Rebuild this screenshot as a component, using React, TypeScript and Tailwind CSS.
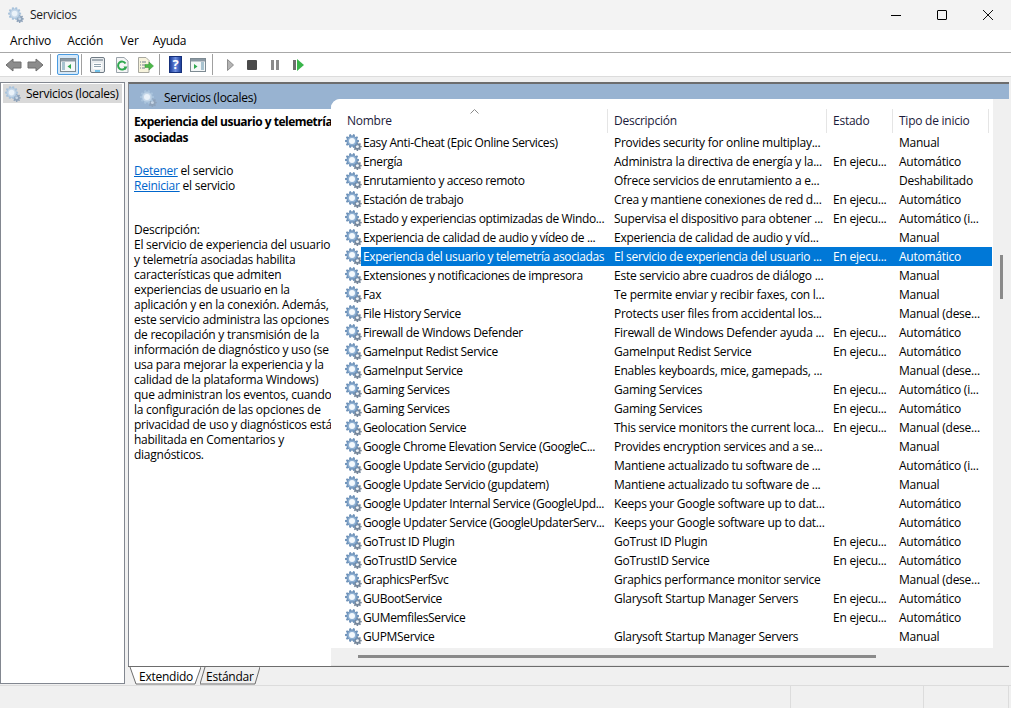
import React from "react";

const rows: [string, string, string, string][] = [
  ["Easy Anti-Cheat (Epic Online Services)", "Provides security for online multiplay...", "", "Manual"],
  ["Energía", "Administra la directiva de energía y la...", "En ejecu...", "Automático"],
  ["Enrutamiento y acceso remoto", "Ofrece servicios de enrutamiento a e...", "", "Deshabilitado"],
  ["Estación de trabajo", "Crea y mantiene conexiones de red d...", "En ejecu...", "Automático"],
  ["Estado y experiencias optimizadas de Windo...", "Supervisa el dispositivo para obtener ...", "En ejecu...", "Automático (i..."],
  ["Experiencia de calidad de audio y vídeo de ...", "Experiencia de calidad de audio y víd...", "", "Manual"],
  ["Experiencia del usuario y telemetría asociadas", "El servicio de experiencia del usuario ...", "En ejecu...", "Automático"],
  ["Extensiones y notificaciones de impresora", "Este servicio abre cuadros de diálogo ...", "", "Manual"],
  ["Fax", "Te permite enviar y recibir faxes, con l...", "", "Manual"],
  ["File History Service", "Protects user files from accidental los...", "", "Manual (dese..."],
  ["Firewall de Windows Defender", "Firewall de Windows Defender ayuda ...", "En ejecu...", "Automático"],
  ["GameInput Redist Service", "GameInput Redist Service", "En ejecu...", "Automático"],
  ["GameInput Service", "Enables keyboards, mice, gamepads, ...", "", "Manual (dese..."],
  ["Gaming Services", "Gaming Services", "En ejecu...", "Automático (i..."],
  ["Gaming Services", "Gaming Services", "En ejecu...", "Automático"],
  ["Geolocation Service", "This service monitors the current loca...", "En ejecu...", "Manual (dese..."],
  ["Google Chrome Elevation Service (GoogleC...", "Provides encryption services and a se...", "", "Manual"],
  ["Google Update Servicio (gupdate)", "Mantiene actualizado tu software de ...", "", "Automático (i..."],
  ["Google Update Servicio (gupdatem)", "Mantiene actualizado tu software de ...", "", "Manual"],
  ["Google Updater Internal Service (GoogleUpd...", "Keeps your Google software up to dat...", "", "Automático"],
  ["Google Updater Service (GoogleUpdaterServ...", "Keeps your Google software up to dat...", "", "Automático"],
  ["GoTrust ID Plugin", "GoTrust ID Plugin", "En ejecu...", "Automático"],
  ["GoTrustID Service", "GoTrustID Service", "En ejecu...", "Automático"],
  ["GraphicsPerfSvc", "Graphics performance monitor service", "", "Manual (dese..."],
  ["GUBootService", "Glarysoft Startup Manager Servers", "En ejecu...", "Automático"],
  ["GUMemfilesService", "", "En ejecu...", "Automático"],
  ["GUPMService", "Glarysoft Startup Manager Servers", "", "Manual"],
];

const description = [
  "El servicio de experiencia del usuario",
  "y telemetría asociadas habilita",
  "características que admiten",
  "experiencias de usuario en la",
  "aplicación y en la conexión. Además,",
  "este servicio administra las opciones",
  "de recopilación y transmisión de la",
  "información de diagnóstico y uso (se",
  "usa para mejorar la experiencia y la",
  "calidad de la plataforma Windows)",
  "que administran los eventos, cuando",
  "la configuración de las opciones de",
  "privacidad de uso y diagnósticos está",
  "habilitada en Comentarios y",
  "diagnósticos.",
];

function gearPath(cx: number, cy: number, ro: number, ri: number, teeth: number) {
  const pts: string[] = [];
  for (let i = 0; i < teeth; i++) {
    const a = (i / teeth) * Math.PI * 2;
    const w = Math.PI / teeth;
    const p = [
      [ri, a - w * 0.75],
      [ro, a - w * 0.4],
      [ro, a + w * 0.4],
      [ri, a + w * 0.75],
    ];
    for (const [r, t] of p) pts.push(`${(cx + r * Math.cos(t)).toFixed(2)},${(cy + r * Math.sin(t)).toFixed(2)}`);
  }
  return pts.join(" ");
}

function Gears({ className = "", pale = false }: { className?: string; pale?: boolean }) {
  return (
    <svg viewBox="0 0 17 17" className={className}>
      <polygon points={gearPath(12.4, 12.6, 4.4, 3.2, 8)} fill={pale ? "#8fa3ba" : "#75869a"} />
      <circle cx="12.4" cy="12.6" r="1.5" fill={pale ? "#c7d6e6" : "#eef2f6"} />
      <polygon points={gearPath(7, 7, 7, 5.4, 10)} fill={pale ? "#a9c3dc" : "#6f93ba"} />
      <circle cx="7" cy="7" r="4.6" fill={pale ? "#c4d6e8" : "#8fb0d2"} />
      <circle cx="7" cy="7" r="3" fill={pale ? "#eaf2f9" : "#f4f9fd"} />
    </svg>
  );
}

function Toolbar() {
  return (
    <div className="h-[23px] bg-white flex items-center pl-[5px]">
      <svg viewBox="0 0 17 14" className="w-[17px] h-[14px]">
        <path d="M1 7 L8 1 V4 H16 V10 H8 V13 Z" fill="#8c8c8c" stroke="#6f6f6f" strokeWidth="1" />
      </svg>
      <svg viewBox="0 0 17 14" className="w-[17px] h-[14px] ml-[5px]">
        <path d="M16 7 L9 1 V4 H1 V10 H9 V13 Z" fill="#8c8c8c" stroke="#6f6f6f" strokeWidth="1" />
      </svg>
      <div className="w-px h-[21px] bg-[#a0a0a0] ml-[6px] mr-[6px]" />
      <div className="w-[22px] h-[21px] rounded-[2px] border border-[#4a9be0] bg-[#d5e8f8] flex items-center justify-center">
        <svg viewBox="0 0 16 14" className="w-[16px] h-[14px]">
          <rect x="0.5" y="0.5" width="15" height="13" fill="#f4f7f8" stroke="#7d8a92" />
          <rect x="1" y="1" width="14" height="2.5" fill="#8a98a3" />
          <path d="M2 5h3M2 7h3M2 9h3M2 11h3" stroke="#5d8fa8" />
          <path d="M11 6 V11 L7.5 8.5 Z" fill="#2fa84f" />
        </svg>
      </div>
      <div className="w-px h-[21px] bg-[#a0a0a0] ml-[2px] mr-[8px]" />
      <svg viewBox="0 0 15 16" className="w-[15px] h-[16px]">
        <rect x="0.5" y="0.5" width="14" height="15" rx="1.5" fill="#e9ecee" stroke="#6f7a84" />
        <rect x="2" y="2" width="11" height="2" fill="#a4aeb6" />
        <rect x="3" y="6" width="9" height="6" fill="#fbfcfc" />
        <path d="M4 7.5h7M4 9.5h7" stroke="#8fa1ad" />
        <path d="M5 14h5" stroke="#3fb0e8" strokeWidth="1.4" />
      </svg>
      <svg viewBox="0 0 14 16" className="w-[14px] h-[16px] ml-[10px]">
        <path d="M1.5 .5H9L13 4V15.5H1.5Z" fill="#f5f6f6" stroke="#9aa3aa" />
        <path d="M10.5 6.5A4 4 0 1 0 10.6 10.5" fill="none" stroke="#2fa84f" strokeWidth="2" />
        <path d="M8.5 9.5 L12.5 9.5 L10.5 13 Z" fill="#2fa84f" />
      </svg>
      <svg viewBox="0 0 17 16" className="w-[17px] h-[16px] ml-[8px]">
        <path d="M1.5 .5H9L12 3.5V15.5H1.5Z" fill="#f7f3dc" stroke="#a8a8a0" />
        <path d="M3 5h1M5 5h4M3 8h1M5 8h3M3 11h1M5 11h3" stroke="#6f7f8f" />
        <path d="M8 7.5H12V5L16.5 9L12 13V10.5H8Z" fill="#4cb848" stroke="#2f8f33" strokeWidth=".5" />
      </svg>
      <div className="w-px h-[21px] bg-[#a0a0a0] ml-[5px] mr-[9px]" />
      <div className="w-[13px] h-[17px] bg-gradient-to-r from-[#1f3f9c] via-[#6f8fe0] to-[#1f3f9c] border border-[#16307a] text-white text-[13px] leading-[15px] font-bold text-center">?</div>
      <svg viewBox="0 0 16 14" className="w-[16px] h-[14px] ml-[8px]">
        <rect x="0.5" y="0.5" width="15" height="13" fill="#f4f7f8" stroke="#7d8a92" />
        <rect x="1" y="1" width="14" height="2.5" fill="#8a98a3" />
        <path d="M11 5h3M11 7h3M11 9h3M11 11h3" stroke="#5d8fa8" />
        <path d="M4 6 V11 L7.5 8.5 Z" fill="#2fa84f" />
      </svg>
      <div className="w-px h-[21px] bg-[#a0a0a0] ml-[6px] mr-[14px]" />
      <svg viewBox="0 0 7 12" className="w-[7px] h-[12px]">
        <path d="M.5 .5 L6.5 6 L.5 11.5 Z" fill="#b4b4b4" stroke="#8d8d8d" />
      </svg>
      <div className="w-[10px] h-[10px] ml-[13px] bg-[#4a4a4a] rounded-[1px]" />
      <div className="ml-[14px] flex gap-[2px]">
        <div className="w-[3px] h-[10px] bg-[#8a8a8a]" />
        <div className="w-[3px] h-[10px] bg-[#8a8a8a]" />
      </div>
      <div className="ml-[14px] flex items-center gap-[1px]">
        <div className="w-[3px] h-[10px] bg-[#6f6f6f]" />
        <svg viewBox="0 0 7 12" className="w-[7px] h-[12px]">
          <path d="M0 0 L7 6 L0 12 Z" fill="#39b54a" />
        </svg>
      </div>
    </div>
  );
}

function Row({ r }: { r: [string, string, string, string] }) {
  const selected = r[0].startsWith("Experiencia del usuario");
  const bg = selected ? "bg-[#0078d7] text-white" : "text-black";
  return (
    <div className="grid grid-cols-[276px_219px_66px_100px] h-[19px] leading-[19px] whitespace-nowrap">
      <div className="flex pl-[14px] overflow-hidden">
        <Gears className="w-[17px] h-[17px] mt-px shrink-0" />
        <div className={`flex-1 ml-[-1px] pl-[2px] overflow-hidden tracking-[-0.36px] ${bg}`}>{r[0]}</div>
      </div>
      <div className={`pl-[7px] overflow-hidden ${bg}`}>{r[1]}</div>
      <div className={`pl-[7px] overflow-hidden ${bg}`}>{r[2]}</div>
      <div className={`pl-[7px] overflow-hidden ${bg}`}>{r[3]}</div>
    </div>
  );
}

export default function App() {
  return (
    <div
      className="w-[1011px] h-[708px] overflow-hidden bg-[#f0f0f0] flex flex-col text-[12px] text-black tracking-[-0.25px]"
      style={{ fontFamily: '"Open Sans", "Noto Sans", sans-serif' }}
    >
      {/* Title bar */}
      <div className="h-[30px] bg-[#f3f3f3] flex items-center pl-[8px]">
        <Gears pale className="w-[16px] h-[16px]" />
        <span className="ml-[6px] text-[#1a1a1a]">Servicios</span>
        <div className="ml-auto flex items-center">
          <div className="w-[46px] h-[30px] flex items-center justify-center">
            <div className="w-[10px] h-px bg-black" />
          </div>
          <div className="w-[46px] h-[30px] flex items-center justify-center">
            <div className="w-[10px] h-[10px] border border-black rounded-[1px]" />
          </div>
          <div className="w-[46px] h-[30px] flex items-center justify-center">
            <svg viewBox="0 0 10 10" className="w-[10px] h-[10px]">
              <path d="M0 0L10 10M10 0L0 10" stroke="#111" strokeWidth="1" />
            </svg>
          </div>
        </div>
      </div>

      {/* Menu */}
      <div className="h-[23px] bg-white border-b border-[#a8a8a8] flex items-center pl-[10px] text-[12px] tracking-[-0.1px]">
        <span>Archivo</span>
        <span className="ml-[16px]">Acción</span>
        <span className="ml-[17px]">Ver</span>
        <span className="ml-[14px] tracking-[-0.3px]">Ayuda</span>
      </div>

      <Toolbar />

      <div className="h-[6px] bg-[#f0f0f0] border-t border-[#dcdcdc]" />

      {/* Main */}
      <div className="flex-1 flex min-h-0">
        {/* Tree */}
        <div className="w-[125px] h-[602px] bg-white border border-[#828790] pt-[1px] pl-[2px] pr-[2px] self-start">
          <div className="h-[19px] bg-[#d9d9d9] flex items-center pl-[2px] whitespace-nowrap">
            <Gears pale className="w-[16px] h-[16px] shrink-0" />
            <span className="ml-[5px]">Servicios (locales)</span>
          </div>
        </div>

        {/* Right panel */}
        <div className="ml-[3px] w-[881px] flex flex-col">
          <div className="flex-1 min-h-0 flex border-t-2 border-[#6d6d6d] border-l border-l-[#828790]">
            {/* Description pane */}
            <div className="w-[202px] flex flex-col bg-white">
              <div className="h-[25px] bg-[#98b3d1] flex items-center pl-[11px] pt-[3px] whitespace-nowrap">
                <Gears pale className="w-[17px] h-[17px] shrink-0" />
                <span className="ml-[7px]">Servicios (locales)</span>
              </div>
              <div className="pl-[5px] pt-[5px] leading-[15px] whitespace-nowrap">
                <div className="font-bold leading-[16px] tracking-[-0.5px]">
                  Experiencia del usuario y telemetría
                  <br />
                  asociadas
                </div>
                <div className="mt-[17px]">
                  <span className="text-[#0066cc] underline">Detener</span> el servicio
                </div>
                <div>
                  <span className="text-[#0066cc] underline">Reiniciar</span> el servicio
                </div>
                <div className="mt-[29px]">Descripción:</div>
                {description.map((l) => (
                  <div key={l}>{l}</div>
                ))}
              </div>
            </div>

            {/* List */}
            <div className="flex-1 min-w-0 flex flex-col bg-[#98b3d1] pt-[15px]">
              <div className="flex-1 min-h-0 flex flex-col bg-[#f0f0f0] rounded-tl-[9px] overflow-hidden">
                <div className="flex-1 min-h-0 flex">
                  <div className="w-[662px] bg-white flex flex-col h-[549px]">
                    <div className="relative grid grid-cols-[277px_219px_66px_96px] h-[34px] shrink-0">
                      <svg viewBox="0 0 9 5" className="absolute left-[139px] top-[10px] w-[9px] h-[5px]">
                        <path d="M.5 4.5L4.5 .5L8.5 4.5" fill="none" stroke="#8a8a8a" />
                      </svg>
                      {["Nombre", "Descripción", "Estado", "Tipo de inicio"].map((h, i) => (
                        <div
                          key={h}
                          className={`${i === 0 ? "pl-[16px]" : "pl-[6px]"} h-[24px] mt-[10px] leading-[24px] border-r border-[#e5e5e5] text-[#1a1a3a]`}
                        >
                          {h}
                        </div>
                      ))}
                    </div>
                    <div className="flex-1 min-h-0 overflow-hidden">
                      {rows.map((r, i) => (
                        <Row key={i} r={r} />
                      ))}
                    </div>
                  </div>
                  <div className="w-[16px] h-[549px] relative">
                    <div className="absolute left-[7px] top-[156px] w-[3px] h-[44px] bg-[#8a8a8a]" />
                  </div>
                </div>
                <div className="h-[17px] shrink-0 relative border-b border-[#e3e3e3]">
                  <div className="absolute left-[27px] top-[6px] w-[518px] h-[3px] bg-[#8a8a8a]" />
                </div>
              </div>
            </div>
          </div>

          {/* Tabs */}
          <div className="h-[19px] shrink-0 border-t border-[#6d6d6d] flex pl-[1px]">
            <div className="relative w-[72px] h-[18px]">
              <svg viewBox="0 0 72 18" className="absolute inset-0 w-[72px] h-[18px]">
                <path d="M1 0 L7 17 H66 L72 0" fill="#fff" stroke="#6d6d6d" />
              </svg>
              <span className="absolute left-[10px] top-[1px] leading-[18px]">Extendido</span>
            </div>
            <div className="relative w-[60px] h-[18px] -ml-[1px]">
              <svg viewBox="0 0 60 18" className="absolute inset-0 w-[60px] h-[18px]">
                <path d="M0 17 H55 L60 0 M0 17 L5 0" fill="none" stroke="#6d6d6d" />
              </svg>
              <span className="absolute left-[6px] top-[1px] leading-[18px]">Estándar</span>
            </div>
          </div>
        </div>
      </div>

      {/* Status bar */}
      <div className="h-[23px] shrink-0 border-t border-[#dcdcdc] flex">
        <div className="w-[791px] border-r border-[#dcdcdc]" />
        <div className="w-[133px] border-r border-[#dcdcdc]" />
        <div className="w-[85px] border-r border-[#dcdcdc]" />
      </div>
    </div>
  );
}
